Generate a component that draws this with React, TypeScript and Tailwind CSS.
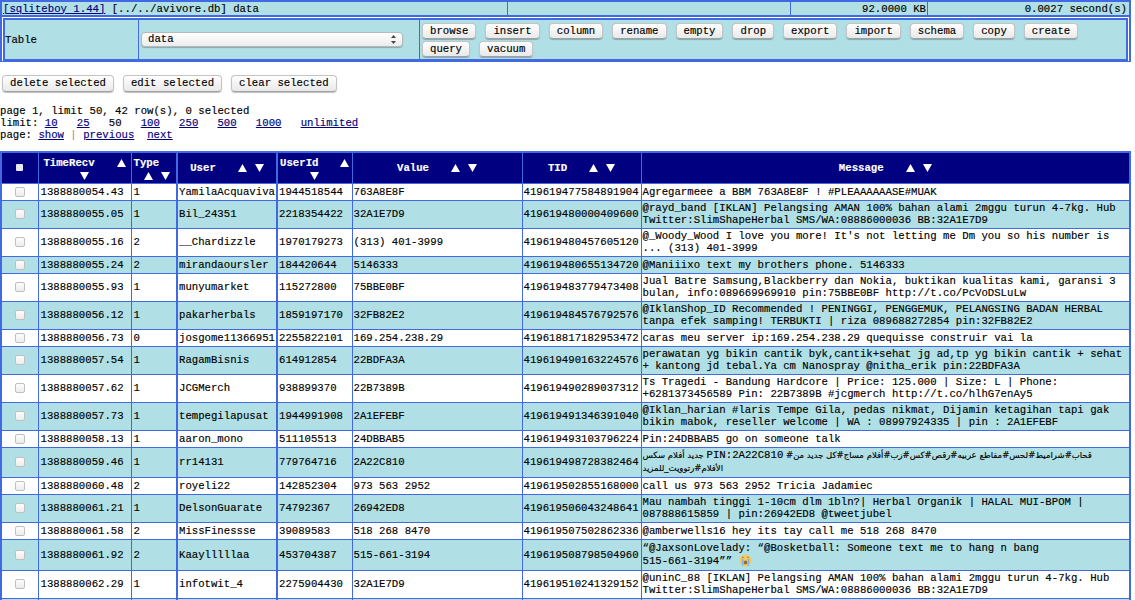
const rows: { time: string; type: string; user: string; uid: string; value: string; tid: string; msg: string; h: string }[] = [
  { time: '1388880054.43', type: '1', user: 'YamilaAcquaviva', uid: '1944518544', value: '763A8E8F', tid: '419619477584891904', msg: 'Agregarmeee a BBM 763A8E8F ! #PLEAAAAAASE#MUAK', h: 'h-[17px]' },
  { time: '1388880055.05', type: '1', user: 'Bil_24351', uid: '2218354422', value: '32A1E7D9', tid: '419619480000409600', msg: '@rayd_band [IKLAN] Pelangsing AMAN 100% bahan alami 2mggu turun 4-7kg. Hub\nTwitter:SlimShapeHerbal SMS/WA:08886000036 BB:32A1E7D9', h: 'h-[28px]' },
  { time: '1388880055.16', type: '2', user: '__Chardizzle', uid: '1970179273', value: '(313) 401-3999', tid: '419619480457605120', msg: "@_Woody_Wood I love you more! It's not letting me Dm you so his number is\n... (313) 401-3999", h: 'h-[28px]' },
  { time: '1388880055.24', type: '2', user: 'mirandaoursler', uid: '184420644', value: '5146333', tid: '419619480655134720', msg: '@Maniiixo text my brothers phone. 5146333', h: 'h-[17px]' },
  { time: '1388880055.93', type: '1', user: 'munyumarket', uid: '115272800', value: '75BBE0BF', tid: '419619483779473408', msg: 'Jual Batre Samsung,Blackberry dan Nokia, buktikan kualitas kami, garansi 3\nbulan, info:089669969910 pin:75BBE0BF http://t.co/PcVoDSLuLw', h: 'h-[28px]' },
  { time: '1388880056.12', type: '1', user: 'pakarherbals', uid: '1859197170', value: '32FB82E2', tid: '419619484576792576', msg: '@IklanShop_ID Recommended ! PENINGGI, PENGGEMUK, PELANGSING BADAN HERBAL\ntanpa efek samping! TERBUKTI | riza 089688272854 pin:32FB82E2', h: 'h-[28px]' },
  { time: '1388880056.73', type: '0', user: 'josgome11366951', uid: '2255822101', value: '169.254.238.29', tid: '419618817182953472', msg: 'caras meu server ip:169.254.238.29 quequisse construir vai la', h: 'h-[17px]' },
  { time: '1388880057.54', type: '1', user: 'RagamBisnis', uid: '614912854', value: '22BDFA3A', tid: '419619490163224576', msg: 'perawatan yg bikin cantik byk,cantik+sehat jg ad,tp yg bikin cantik + sehat\n+ kantong jd tebal.Ya cm Nanospray @nitha_erik pin:22BDFA3A', h: 'h-[28px]' },
  { time: '1388880057.62', type: '1', user: 'JCGMerch', uid: '938899370', value: '22B7389B', tid: '419619490289037312', msg: 'Ts Tragedi - Bandung Hardcore | Price: 125.000 | Size: L | Phone:\n+6281373456589 Pin: 22B7389B #jcgmerch http://t.co/hlhG7enAy5', h: 'h-[28px]' },
  { time: '1388880057.73', type: '1', user: 'tempegilapusat', uid: '1944991908', value: '2A1EFEBF', tid: '419619491346391040', msg: '@Iklan_harian #laris Tempe Gila, pedas nikmat, Dijamin ketagihan tapi gak\nbikin mabok, reseller welcome | WA : 08997924335 | pin : 2A1EFEBF', h: 'h-[28px]' },
  { time: '1388880058.13', type: '1', user: 'aaron_mono', uid: '511105513', value: '24DBBAB5', tid: '419619493103796224', msg: 'Pin:24DBBAB5 go on someone talk', h: 'h-[17px]' },
  { time: '1388880059.46', type: '1', user: 'rr14131', uid: '779764716', value: '2A22C810', tid: '419619498728382464', msg: '', h: 'h-[30px]' },
  { time: '1388880060.48', type: '2', user: 'royeli22', uid: '142852304', value: '973 563 2952', tid: '419619502855168000', msg: 'call us 973 563 2952 Tricia Jadamiec', h: 'h-[17px]' },
  { time: '1388880061.21', type: '1', user: 'DelsonGuarate', uid: '74792367', value: '26942ED8', tid: '419619506043248641', msg: 'Mau nambah tinggi 1-10cm dlm 1bln?| Herbal Organik | HALAL MUI-BPOM |\n087888615859 | pin:26942ED8 @tweetjubel', h: 'h-[28px]' },
  { time: '1388880061.58', type: '2', user: 'MissFinessse', uid: '39089583', value: '518 268 8470', tid: '419619507502862336', msg: '@amberwells16 hey its tay call me 518 268 8470', h: 'h-[17px]' },
  { time: '1388880061.92', type: '2', user: 'Kaaylllllaa', uid: '453704387', value: '515-661-3194', tid: '419619508798504960', msg: '“@JaxsonLovelady: “@Bosketball: Someone text me to hang n bang\n515-661-3194”” ', h: 'h-[31px]' },
  { time: '1388880062.29', type: '1', user: 'infotwit_4', uid: '2275904430', value: '32A1E7D9', tid: '419619510241329152', msg: '@uninC_88 [IKLAN] Pelangsing AMAN 100% bahan alami 2mggu turun 4-7kg. Hub\nTwitter:SlimShapeHerbal SMS/WA:08886000036 BB:32A1E7D9', h: 'h-[28px]' },
]

const topButtons = ['browse', 'insert', 'column', 'rename', 'empty', 'drop', 'export', 'import', 'schema', 'copy', 'create', 'query', 'vacuum']
const limits = ['10', '25', '50', '100', '250', '500', '1000', 'unlimited']

function Btn({ label, tall }: { label: string; tall?: boolean }) {
  return (
    <button className={`${tall ? 'h-[17px]' : 'h-[16px]'} px-[7px] leading-none rounded-[4px] border border-[#c4c4c4] border-b-[#a0a0a0] bg-linear-to-b from-white to-[#e9e9e9] shadow-[0_1px_1px_rgba(0,0,0,0.25)]`}>
      {label}
    </button>
  )
}

function Up() {
  return (
    <svg width="9" height="8" viewBox="0 0 9 8" className="shrink-0">
      <polygon points="4.5,0 9,8 0,8" fill="#fff" />
    </svg>
  )
}

function Down() {
  return (
    <svg width="9" height="8" viewBox="0 0 9 8" className="shrink-0">
      <polygon points="0,0 9,0 4.5,8" fill="#fff" />
    </svg>
  )
}

function Box() {
  return (
    <input
      type="checkbox"
      readOnly
      className="appearance-none block mx-auto w-[10px] h-[10px] rounded-[2px] border border-[#c0c0c0] bg-linear-to-b from-[#fdfdfd] to-[#ececec]"
    />
  )
}

function HeadInline({ label }: { label: string }) {
  return (
    <div className="flex items-center justify-center gap-[22px]">
      <span>{label}</span>
      <span className="flex items-center gap-[8px]">
        <Up />
        <Down />
      </span>
    </div>
  )
}

function HeadWrapped({ label, gap }: { label: string; gap: string }) {
  return (
    <div className="flex flex-col items-center gap-[3px] pt-[1px]">
      <div className={`flex items-center justify-center ${gap}`}>
        <span>{label}</span>
        <Up />
      </div>
      <Down />
    </div>
  )
}

function CryingFace() {
  return (
    <svg width="13" height="13" viewBox="0 0 13 13" className="inline-block align-[-3px] ml-[1px]">
      <circle cx="6.5" cy="6.5" r="6" fill="#f4c95d" />
      <path d="M2.6 5h1.8v7H3zM8.6 5h1.8l-.4 7H8.6z" fill="#7db6e4" />
      <ellipse cx="6.5" cy="8.4" rx="1.8" ry="2" fill="#9a6a3a" />
      <path d="M2.8 3.8l2.2-.7M10.2 3.8L8 3.1" stroke="#8a6a30" strokeWidth="0.7" fill="none" />
    </svg>
  )
}

function Message({ row }: { row: (typeof rows)[number] }) {
  if (row.user === 'rr14131') {
    return (
      <div dir="rtl" className="text-left font-['DejaVu_Sans','Liberation_Mono',sans-serif] text-[8.5px] leading-[13px] whitespace-pre">
        <div>قحاب#شراميط#لحس#مقاطع عربيه#رقص#كس#زب#أفلام مساج#كل جديد من# <span className="font-['Liberation_Mono',monospace] text-[10.67px]">PIN:2A22C810</span> جديد أفلام سكس</div>
        <div>الأفلام#رتوويت_للمزيد</div>
      </div>
    )
  }
  return (
    <div className="whitespace-pre leading-[12px]">
      {row.msg}
      {row.user === 'Kaaylllllaa' && <CryingFace />}
    </div>
  )
}

export default function App() {
  return (
    <div className="h-[600px] w-[1135px] overflow-hidden bg-white text-black text-[10.67px] leading-[12px] [-webkit-text-stroke-width:0.15px] font-['Liberation_Mono','Courier_New',monospace]">
      <div className="w-[1131px] border-2 border-b border-[#4169e1] bg-white">
        <div className="flex h-[13px] items-center bg-[#b0e0e6] border-b-2 border-[#4169e1] box-content">
          <div className="w-[506px] h-full flex items-center pl-[1px] border-r border-[#4169e1]">
            <a href="#" className="text-[#000080] underline">[sqliteboy 1.44]</a>
            <span className="ml-[6.4px]">[../../avivore.db] data</span>
          </div>
          <div className="w-[283px] h-full border-r border-[#4169e1]" />
          <div className="w-[137px] h-full flex items-center justify-end pr-[1px] border-r border-[#4169e1]">92.0000 KB</div>
          <div className="flex-1 h-full flex items-center justify-end pr-[2px]">0.0027 second(s)</div>
        </div>
        <div className="pt-[1px] px-[1px]">
          <div className="flex h-[39px] box-content bg-[#b0e0e6] border-2 border-[#4169e1]">
            <div className="w-[134px] flex items-center border-r border-[#4169e1]">Table</div>
            <div className="w-[281px] pl-[2px] pt-[12px] border-r border-[#4169e1]">
              <div className="relative w-[262px] h-[15px]">
                <select className="appearance-none block w-full h-full pl-[6px] rounded-[4px] border border-[#b8b8b8] bg-linear-to-b from-white to-[#ececec] shadow-[0_1px_1px_rgba(0,0,0,0.25)] leading-none">
                  <option>data</option>
                </select>
                <svg width="5" height="9" viewBox="0 0 5 9" className="absolute right-[7px] top-[3px]">
                  <polygon points="2.5,0 5,3 0,3" fill="#444" />
                  <polygon points="0,6 5,6 2.5,9" fill="#444" />
                </svg>
              </div>
            </div>
            <div className="flex-1 flex flex-wrap content-start gap-x-[9px] gap-y-[2px] pl-[2px] pr-[40px] pt-[3px]">
              {topButtons.map((b) => (
                <Btn key={b} label={b} />
              ))}
            </div>
          </div>
        </div>
      </div>

      <div className="flex gap-[9px] pl-[2px] mt-[13px]">
        <Btn tall label="delete selected" />
        <Btn tall label="edit selected" />
        <Btn tall label="clear selected" />
      </div>

      <div className="mt-[13px] h-[36px]">
        <div>page 1, limit 50, 42 row(s), 0 selected</div>
        <div className="flex">
          <span className="mr-[6.4px]">limit:</span>
          <div className="flex gap-[19.2px]">
            {limits.map((l) =>
              l === '50' ? (
                <span key={l}>{l}</span>
              ) : (
                <a key={l} href="#" className="text-[#000080] underline">
                  {l}
                </a>
              ),
            )}
          </div>
        </div>
        <div className="flex">
          <span className="mr-[6.4px]">page:</span>
          <a href="#" className="text-[#000080] underline">show</a>
          <span className="mx-[6.4px] text-[#c58a60]">|</span>
          <a href="#" className="text-[#000080] underline">previous</a>
          <a href="#" className="ml-[12.8px] text-[#000080] underline">next</a>
        </div>
      </div>

      <table className="mt-[10px] w-[1131px] table-fixed border-collapse border-2 border-[#4169e1]">
        <colgroup>
          <col className="w-[37px]" />
          <col className="w-[93px]" />
          <col className="w-[46px]" />
          <col className="w-[100px]" />
          <col className="w-[75px]" />
          <col className="w-[170px]" />
          <col className="w-[119px]" />
          <col />
        </colgroup>
        <thead>
          <tr className="h-[31px] bg-[#000080] text-white font-bold [&>th]:border [&>th]:border-[#4169e1] [&>th]:p-0 [&>th]:align-middle">
            <th>
              <div className="mx-auto w-[7px] h-[7px] rounded-[1px] bg-[#e8e8ee]" />
            </th>
            <th><HeadWrapped label="TimeRecv" gap="gap-[22px]" /></th>
            <th>
              <div className="flex flex-col gap-[3px] pl-[2px] pt-[1px]">
                <span className="text-left">Type</span>
                <div className="flex gap-[8px] pl-[10px]">
                  <Up />
                  <Down />
                </div>
              </div>
            </th>
            <th className="border-x-2!"><HeadInline label="User" /></th>
            <th><HeadWrapped label="UserId" gap="gap-[22px]" /></th>
            <th><HeadInline label="Value" /></th>
            <th><HeadInline label="TID" /></th>
            <th><HeadInline label="Message" /></th>
          </tr>
        </thead>
        <tbody>
          {rows.map((r, i) => (
            <tr
              key={r.time}
              className={`${r.h} ${i % 2 === 0 ? 'bg-white' : 'bg-[#b0e0e6]'} [&>td]:border [&>td]:border-[#4169e1] [&>td]:px-[1px] [&>td]:py-0 [&>td]:align-middle [&>td]:overflow-hidden [&>td]:whitespace-nowrap`}
            >
              <td><Box /></td>
              <td className="pl-[2px]!">{r.time}</td>
              <td className="pl-[2px]!">{r.type}</td>
              <td className="border-x-2!">{r.user}</td>
              <td>{r.uid}</td>
              <td>{r.value}</td>
              <td>{r.tid}</td>
              <td><Message row={r} /></td>
            </tr>
          ))}
          <tr className="h-[17px] bg-[#b0e0e6] [&>td]:border [&>td]:border-[#4169e1]">
            <td /><td /><td /><td className="border-x-2!" /><td /><td /><td /><td />
          </tr>
        </tbody>
      </table>
    </div>
  )
}
